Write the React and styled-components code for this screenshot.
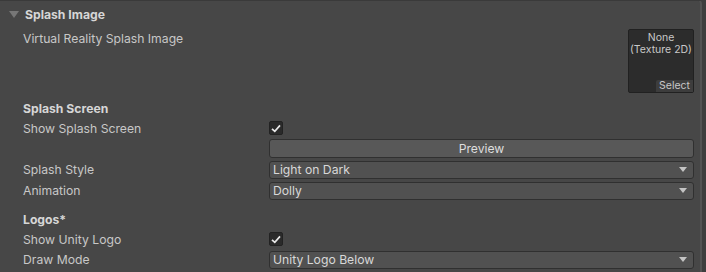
import React from "react";
import styled, { createGlobalStyle } from "styled-components";

const Global = createGlobalStyle`
  html, body {
    margin: 0;
    padding: 0;
    background: #3e3e3e;
  }
  body {
    font-family: Inter, "Noto Sans", sans-serif;
    font-size: 12.2px;
    color: #c8c8c8;
  }
`;

const Panel = styled.div`
  width: 700px;
  height: 271px;
  background: #474747;
  border-top: 1px solid #3a3a3a;
  border-right: 2px solid #535353;
  border-top-right-radius: 4px;
  overflow: hidden;
`;

const Foldout = styled.div`
  display: flex;
  align-items: center;
  gap: 6px;
  height: 20px;
  margin-top: 3px;
  padding-left: 9px;
  font-weight: 700;
  color: #d6d6d6;
`;

const Arrow = styled.span`
  width: 0;
  height: 0;
  border-left: 5px solid transparent;
  border-right: 5px solid transparent;
  border-top: 7px solid #777;
`;

const Body = styled.div`
  padding-left: 23px;
  padding-right: 6px;
`;

const Row = styled.div`
  display: grid;
  grid-template-columns: 246px 1fr;
  align-items: ${(p) => (p.$top ? "start" : "center")};
  height: ${(p) => p.$h || 21}px;
`;

const Label = styled.div`
  white-space: nowrap;
  padding-top: ${(p) => p.$pt || 0}px;
`;

const Heading = styled.div`
  height: 20px;
  display: flex;
  align-items: center;
  font-weight: 700;
  color: #d6d6d6;
  margin-top: ${(p) => p.$mt || 0}px;
`;

const TextureCell = styled.div`
  display: flex;
  justify-content: flex-end;
  padding-top: 5px;
`;

const Texture = styled.div`
  position: relative;
  width: 66px;
  height: 64px;
  background: #2c2c2c;
  border: 1px solid #212121;
  border-radius: 2px;
  text-align: center;
  font-size: 10.5px;
  line-height: 12px;
  padding-top: 2px;
  box-sizing: border-box;
  white-space: nowrap;
  color: #c8c8c8;
`;

const SelectBtn = styled.div`
  position: absolute;
  right: 0;
  bottom: 0;
  padding: 0 3px;
  height: 12px;
  line-height: 12px;
  background: #3d3d3d;
  border-top-left-radius: 2px;
  font-size: 10.5px;
  color: #c8c8c8;
`;

const Check = styled.div`
  width: 14px;
  height: 14px;
  box-sizing: border-box;
  background: #2a2a2a;
  border: 1px solid #222;
  border-radius: 2px;
  display: flex;
  align-items: center;
  justify-content: center;
`;

const Button = styled.div`
  height: 19px;
  box-sizing: border-box;
  background: #585858;
  border: 1px solid #303030;
  border-radius: 3px;
  display: flex;
  align-items: center;
  justify-content: center;
  color: #dedede;
`;

const Dropdown = styled.div`
  height: 18px;
  box-sizing: border-box;
  background: #515151;
  border: 1px solid #303030;
  border-radius: 3px;
  display: flex;
  align-items: center;
  justify-content: space-between;
  padding: 0 6px 0 3px;
  color: #d8d8d8;
`;

const Caret = styled.span`
  width: 0;
  height: 0;
  border-left: 4px solid transparent;
  border-right: 4px solid transparent;
  border-top: 5px solid #c4c4c4;
`;

const Tick = () => (
  <svg width="10" height="9" viewBox="0 0 10 9">
    <path d="M1 4.8 L3.8 7.4 L9 1.4" fill="none" stroke="#e8e8e8" strokeWidth="1.7" />
  </svg>
);

const Toggle = ({ label }) => (
  <Row $h={20}>
    <Label>{label}</Label>
    <Check>
      <Tick />
    </Check>
  </Row>
);

const Popup = ({ label, value }) => (
  <Row>
    <Label>{label}</Label>
    <Dropdown>
      <span>{value}</span>
      <Caret />
    </Dropdown>
  </Row>
);

export default function App() {
  return (
    <>
      <Global />
      <Panel>
        <Foldout>
          <Arrow />
          <span>Splash Image</span>
        </Foldout>
        <Body>
          <Row $top $h={74}>
            <Label $pt={7}>Virtual Reality Splash Image</Label>
            <TextureCell>
              <Texture>
                None
                <br />
                (Texture 2D)
                <SelectBtn>Select</SelectBtn>
              </Texture>
            </TextureCell>
          </Row>
          <Heading>Splash Screen</Heading>
          <Toggle label="Show Splash Screen" />
          <Row>
            <Label />
            <Button>Preview</Button>
          </Row>
          <Popup label="Splash Style" value="Light on Dark" />
          <Popup label="Animation" value="Dolly" />
          <Heading $mt={8}>Logos*</Heading>
          <Toggle label="Show Unity Logo" />
          <Popup label="Draw Mode" value="Unity Logo Below" />
        </Body>
      </Panel>
    </>
  );
}
